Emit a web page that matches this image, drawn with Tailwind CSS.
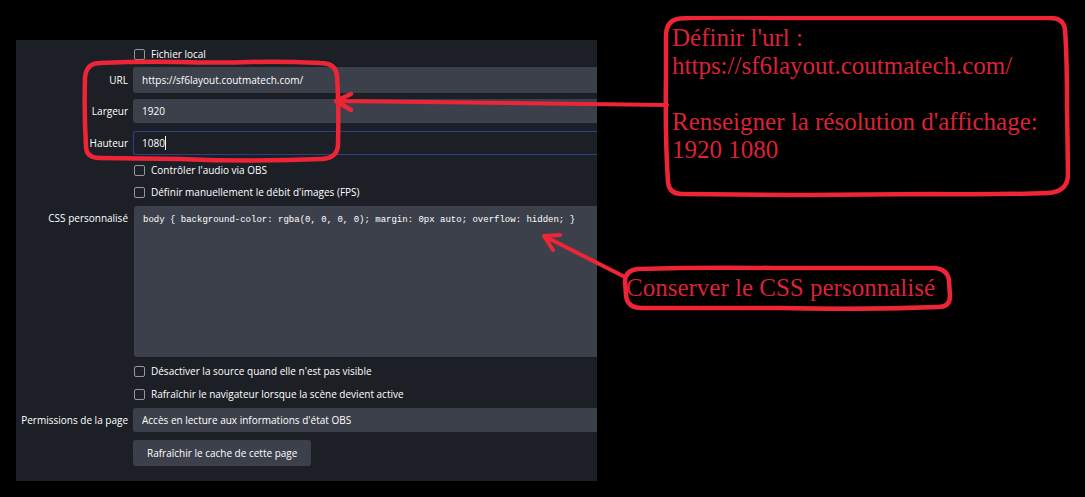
<!DOCTYPE html>
<html lang="fr">
<head>
<meta charset="utf-8">
<meta name="viewport" content="width=device-width, initial-scale=1">
<title>Source navigateur OBS</title>
<script src="https://cdn.jsdelivr.net/npm/@tailwindcss/browser@4"></script>
</head>
<body class="bg-black">
<main class="flex min-h-screen items-start py-4">
  <form class="relative mt-6 ml-4 min-w-0 flex-1 bg-[#1d1f26] pt-1 pb-[15px] font-['Open_Sans',sans-serif] text-[10px] text-white">
    <div class="grid grid-cols-[112px_minmax(0,1fr)] gap-x-[5px]">
      <label class="col-start-2 flex h-5 items-center gap-[6px] pl-px"><input type="checkbox" class="size-[11px] appearance-none rounded-xs border border-[#96979c]">Fichier local</label>

      <label for="url" class="mt-[3px] self-center text-right">URL</label>
      <input id="url" type="text" value="https://sf6layout.coutmatech.com/" class="mt-[3px] h-[26px] min-w-0 rounded-l-[3px] bg-[#3c404b] px-[9px]">

      <label for="width" class="mt-[6px] self-center text-right">Largeur</label>
      <input id="width" type="text" value="1920" class="mt-[6px] h-6 min-w-0 rounded-l-[3px] bg-[#3c404b] px-[9px]">

      <label for="height" class="mt-2 self-center text-right">Hauteur</label>
      <div class="relative mt-2 h-6">
        <input id="height" type="text" value="1080" class="h-6 w-full rounded-l-[3px] border border-r-0 border-[#284282] bg-[#1d1f26] px-2">
        <span class="absolute top-[5px] left-8 h-[14px] w-px bg-white"></span>
      </div>

      <label class="col-start-2 mt-[5px] flex h-5 items-center gap-[6px] pl-px"><input type="checkbox" class="size-[11px] appearance-none rounded-xs border border-[#96979c]">Contrôler l'audio via OBS</label>
      <label class="col-start-2 mt-[2px] flex h-5 items-center gap-[6px] pl-px"><input type="checkbox" class="size-[11px] appearance-none rounded-xs border border-[#96979c]">Définir manuellement le débit d'images (FPS)</label>

      <label for="css" class="mt-2 pt-px text-right">CSS personnalisé</label>
      <textarea id="css" spellcheck="false" class="mt-1 ml-px h-[151px] min-w-0 resize-none overflow-hidden rounded-l-[3px] bg-[#3c404b] px-[9px] py-2 font-['Liberation_Mono',monospace] text-[9px] leading-[13px] whitespace-pre">body { background-color: rgba(0, 0, 0, 0); margin: 0px auto; overflow: hidden; }</textarea>

      <label class="col-start-2 mt-1 flex h-5 items-center gap-[6px] pl-px"><input type="checkbox" class="size-[11px] appearance-none rounded-xs border border-[#96979c]">Désactiver la source quand elle n'est pas visible</label>
      <label class="col-start-2 mt-[3px] flex h-5 items-center gap-[6px] pl-px"><input type="checkbox" class="size-[11px] appearance-none rounded-xs border border-[#96979c]">Rafraîchir le navigateur lorsque la scène devient active</label>

      <label for="perm" class="mt-1 self-center text-right whitespace-nowrap">Permissions de la page</label>
      <select id="perm" class="mt-1 h-6 min-w-0 appearance-none rounded-l-[3px] bg-[#3c404b] px-[9px]"><option>Accès en lecture aux informations d'état OBS</option></select>

      <button type="button" class="col-start-2 mt-2 h-[26px] justify-self-start rounded-[3px] bg-[#3c404b] px-[14px]">Rafraîchir le cache de cette page</button>
    </div>

    <!-- hand-drawn frame around the URL and size fields -->
    <svg class="pointer-events-none absolute top-[14px] left-16 h-28 w-[280px]" viewBox="0 0 280 112" fill="none" stroke="#ee2536" stroke-width="4.5" stroke-linecap="round" stroke-linejoin="round" aria-hidden="true">
      <path d="M20 9 Q60 7 100 8 T170 8 T240 9 Q256 9 257 22 Q259 50 258 90 Q258 104 242 105 Q170 108 100 105 L20 104 Q6 104 6 92 Q4 60 5 24 Q6 9 20 9Z"/>
      <path d="M271 40 L256 47 L271 56"/>
    </svg>
    <!-- arrow shaft leading to the frame -->
    <svg class="pointer-events-none absolute top-[58px] -right-[72px] left-[320px] h-[10px]" width="333" viewBox="0 0 333 10" preserveAspectRatio="none" fill="none" aria-hidden="true">
      <path d="M2 3 L331 7" stroke="#ee2536" stroke-width="4" stroke-linecap="round"/>
    </svg>
    <!-- arrow leading to the custom CSS -->
    <svg class="pointer-events-none absolute top-[190px] -right-[32px] h-[52px] w-[92px]" viewBox="0 0 92 52" fill="none" stroke="#ee2536" stroke-width="4" stroke-linecap="round" stroke-linejoin="round" aria-hidden="true">
      <path d="M86 46 L7 6 M23 5 L7 6 L16 20"/>
    </svg>
  </form>

  <aside class="w-[488px] shrink-0 pr-[15px] font-['Liberation_Serif',serif] text-[25px] leading-7 text-[#dc2236]">
    <section class="relative ml-[65px] h-[182px] pt-2 pl-[10px] whitespace-nowrap">
      <svg class="pointer-events-none absolute inset-0 size-full" viewBox="0 0 408 182" preserveAspectRatio="none" fill="none" stroke="#ee2536" stroke-width="4.5" stroke-linejoin="round" aria-hidden="true">
        <path d="M18 2.5 Q50 1 120 2 L260 2 L388 2 Q402 2 403 14 Q405 40 405 90 L406 158 Q406 176 386 177 Q330 179 270 178 L140 179 L20 178 Q7 178 6 166 Q3 120 4 60 L4 20 Q4 4 18 2.5Z"/>
      </svg>
      <p>Définir l'url :<br>https://sf6layout.coutmatech.com/</p>
      <p class="mt-7">Renseigner la résolution d'affichage:<br>1920 1080</p>
    </section>
    <section class="relative mt-[67px] ml-[25px] flex h-[46px] w-[332px] items-center pl-1 whitespace-nowrap">
      <svg class="pointer-events-none absolute inset-0 size-full" viewBox="0 0 332 46" fill="none" stroke="#ee2536" stroke-width="4.5" stroke-linejoin="round" aria-hidden="true">
        <path d="M16 4 Q80 2 150 3 L312 3 Q326 4 327 16 L328 31 Q328 42 316 42 Q240 45 160 43 L20 43 Q5 43 4 30 L3 17 Q3 5 16 4Z"/>
      </svg>
      <p>Conserver le CSS personnalisé</p>
    </section>
  </aside>
</main>
</body>
</html>
